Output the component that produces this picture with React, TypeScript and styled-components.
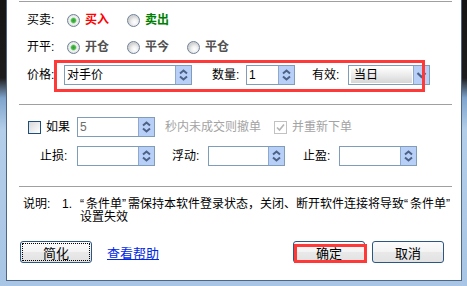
import React from "react";
import styled, { createGlobalStyle } from "styled-components";

const GlobalStyle = createGlobalStyle`
    body {
        margin: 0;
        font-family: "Liberation Sans", "Noto Sans CJK SC", sans-serif;
        font-size: 12px;
        color: #000;
    }
`

const Frame = styled.div`
    width: 467px;
    height: 286px;
    box-sizing: border-box;
    padding: 0 5px 5px 6px;
    background: linear-gradient(to bottom, #151515 0, #1d1d1d 78px, #7fa4cc 98px, #b3cee9 130px, #a8c5e5 286px);
`

const Panel = styled.div`
    height: 100%;
    box-sizing: border-box;
    background: #fff;
    border: 1px solid #4e6583;
    border-top: none;
    padding: 0 9px 0 12px;
    overflow: hidden;
`

const Rule = styled.div<{ $top: number }>`
    height: 1px;
    background: #a0a0a0;
    margin-top: ${p => p.$top}px;
`

const Row = styled.div<{ $top: number; $left: number; $h?: number }>`
    display: flex;
    align-items: center;
    height: ${p => p.$h ?? 20}px;
    margin-top: ${p => p.$top}px;
    padding-left: ${p => p.$left}px;
    line-height: 13px;
    white-space: nowrap;
`

const HighlightRow = styled(Row)`
    position: relative;
    &::after {
        content: "";
        position: absolute;
        left: 35px;
        top: -5px;
        width: 371px;
        height: 32px;
        box-sizing: border-box;
        border: 3px solid #ff3838;
        pointer-events: none;
    }
`

const Label = styled.span<{ $w: number; $gray?: boolean }>`
    display: inline-block;
    width: ${p => p.$w}px;
    flex: none;
    color: ${p => (p.$gray ? "#a3a3a3" : "#000")};
`

const Gap = styled.span<{ $w: number }>`
    display: inline-block;
    width: ${p => p.$w}px;
    flex: none;
`

const RadioItem = styled.label`
    display: flex;
    align-items: center;
    width: 60px;
    flex: none;
`

const RadioDot = styled.span<{ $on?: boolean }>`
    width: 13px;
    height: 13px;
    box-sizing: border-box;
    border-radius: 50%;
    border: 1px solid #6f829a;
    margin-right: 5px;
    flex: none;
    background: ${p =>
        p.$on
            ? "radial-gradient(circle, #2f9e2f 0, #48b848 2px, #bfe6bf 3px, #f4f4f4 3.6px, #dcdcdc 6px)"
            : "radial-gradient(circle at 60% 65%, #ffffff 0, #f1f1f1 3px, #d2d2d2 6px)"};
`

const RadioText = styled.span<{ $color: string }>`
    color: ${p => p.$color};
    font-weight: bold;
`

const Field = styled.div<{ $w: number }>`
    display: flex;
    width: ${p => p.$w}px;
    height: 20px;
    box-sizing: border-box;
    border: 1px solid #7f9db9;
    background: #fff;
    flex: none;
`

const FieldText = styled.span<{ $gray?: boolean }>`
    flex: 1;
    padding-left: 2px;
    line-height: 18px;
    color: ${p => (p.$gray ? "#6d6d6d" : "#000")};
    overflow: hidden;
`

const SpinBox = styled.div`
    width: 15px;
    height: 18px;
    background: #b8cff8;
    border-left: 1px solid #8fa9cc;
    flex: none;
    svg { display: block; }
`

const SelectFace = styled.span`
    flex: 1;
    margin: 2px 1px 1px 2px;
    padding-left: 3px;
    line-height: 15px;
    background: linear-gradient(#fdfdfd, #e6e6e6 60%, #d6d6d6);
`

const Check = styled.span<{ $disabled?: boolean }>`
    width: 13px;
    height: 13px;
    box-sizing: border-box;
    border: 1px solid ${p => (p.$disabled ? "#c2c2c2" : "#1c4f7c")};
    background: ${p => (p.$disabled ? "#fff" : "linear-gradient(135deg, #d8d8d8, #ffffff)")};
    margin-right: 5px;
    flex: none;
    svg { display: block; }
`

const Note = styled.div`
    display: flex;
    margin-top: 11px;
    margin-right: -9px;
    padding-left: 4px;
    line-height: 13px;
    white-space: nowrap;
`

const Quote = styled.span`
    display: inline-block;
    width: 6px;
`

const ButtonRow = styled.div`
    display: flex;
    align-items: center;
    margin-top: 17px;
    padding-left: 1px;
    padding-right: 8px;
`

const Button = styled.button<{ $focus?: boolean }>`
    width: 72px;
    height: 22px;
    padding: 0;
    box-sizing: border-box;
    border: 1px solid #2c5783;
    border-radius: 3px;
    background: linear-gradient(#fbfbfb 0, #f3f3f3 50%, #e9e9e9 51%, #e2e2e2 100%);
    font: inherit;
    font-size: 13px;
    color: #000;
    outline: ${p => (p.$focus ? "1px dotted #000" : "none")};
    outline-offset: -3px;
`

const OkWrap = styled.span`
    position: relative;
    margin-left: auto;
    margin-right: 7px;
    display: flex;
    &::after {
        content: "";
        position: absolute;
        left: 1px;
        top: 3px;
        width: 73px;
        height: 19px;
        box-sizing: border-box;
        border: 3px solid #ff3838;
        pointer-events: none;
    }
`

const HelpLink = styled.a`
    margin-left: 15px;
    color: #0026e6;
    text-decoration: underline;
    font-size: 13px;
`

const Spin = () => (
    <SpinBox>
        <svg width="15" height="18" viewBox="0 0 15 18">
            <path d="M4 7.5 L7.5 4.5 L11 7.5" fill="none" stroke="#4d6185" strokeWidth="2" />
            <path d="M4 10.5 L7.5 13.5 L11 10.5" fill="none" stroke="#4d6185" strokeWidth="2" />
        </svg>
    </SpinBox>
)

const Drop = () => (
    <SpinBox>
        <svg width="15" height="18" viewBox="0 0 15 18">
            <path d="M3.5 7 L7.5 11 L11.5 7" fill="none" stroke="#4d6185" strokeWidth="2.2" />
        </svg>
    </SpinBox>
)

const SpinInput: React.FC<{ w: number; value?: string; gray?: boolean }> = ({ w, value, gray }) => (
    <Field $w={w}>
        <FieldText $gray={gray}>{value}</FieldText>
        <Spin />
    </Field>
)

const Radio: React.FC<{ on?: boolean; text: string; color: string }> = ({ on, text, color }) => (
    <RadioItem>
        <RadioDot $on={on} />
        <RadioText $color={color}>{text}</RadioText>
    </RadioItem>
)

export default function App() {
    return (
        <Frame>
            <GlobalStyle />
            <Panel>
                <Rule $top={1} />
                <Row $top={8} $left={8}>
                    <Label $w={40}>买卖:</Label>
                    <Radio on text="买入" color="#ff0000" />
                    <Radio text="卖出" color="#008000" />
                </Row>
                <Row $top={7} $left={8}>
                    <Label $w={40}>开平:</Label>
                    <Radio on text="开仓" color="#505050" />
                    <Radio text="平今" color="#505050" />
                    <Radio text="平仓" color="#505050" />
                </Row>
                <HighlightRow $top={8} $left={8}>
                    <Label $w={37}>价格:</Label>
                    <SpinInput w={128} value="对手价" />
                    <Gap $w={20} />
                    <Label $w={34}>数量:</Label>
                    <SpinInput w={49} value="1" />
                    <Gap $w={17} />
                    <Label $w={36}>有效:</Label>
                    <Field $w={82}>
                        <SelectFace>当日</SelectFace>
                        <Drop />
                    </Field>
                </HighlightRow>
                <Rule $top={19} />
                <Row $top={12} $left={9}>
                    <Check />
                    <Label $w={31}>如果</Label>
                    <SpinInput w={78} value="5" gray />
                    <Gap $w={10} />
                    <Label $w={109} $gray>秒内未成交则撤单</Label>
                    <Check $disabled>
                        <svg width="11" height="11" viewBox="0 0 11 11">
                            <path d="M2 5.5 L4.5 8 L9 2.5" fill="none" stroke="#b4b4b4" strokeWidth="1.6" />
                        </svg>
                    </Check>
                    <Label $w={70} $gray>并重新下单</Label>
                </Row>
                <Row $top={9} $left={21}>
                    <Label $w={37}>止损:</Label>
                    <SpinInput w={78} />
                    <Gap $w={17} />
                    <Label $w={36}>浮动:</Label>
                    <SpinInput w={77} />
                    <Gap $w={18} />
                    <Label $w={36}>止盈:</Label>
                    <SpinInput w={78} />
                </Row>
                <Rule $top={20} />
                <Note>
                    <Label $w={39}>说明:</Label>
                    <Label $w={18}>1.</Label>
                    <div>
                        <div>
                            <Quote>“</Quote>条件单<Quote>”</Quote>需保持本软件登录状态，关闭、断开软件连接将导致<Quote>“</Quote>条件单<Quote>”</Quote>
                        </div>
                        <div>设置失效</div>
                    </div>
                </Note>
                <ButtonRow>
                    <Button $focus>简化</Button>
                    <HelpLink>查看帮助</HelpLink>
                    <OkWrap>
                        <Button>确定</Button>
                    </OkWrap>
                    <Button>取消</Button>
                </ButtonRow>
            </Panel>
        </Frame>
    );
}
